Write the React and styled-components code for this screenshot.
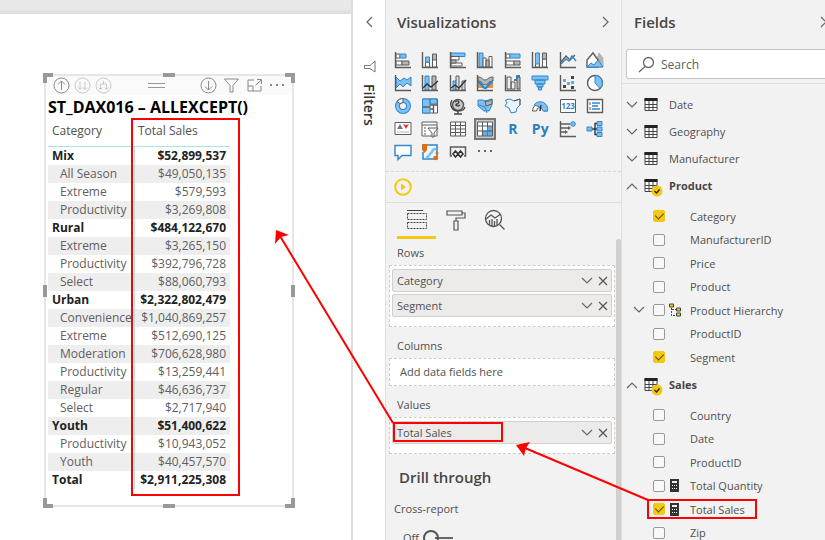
import React, { useState } from "react";
import styled, { createGlobalStyle, css } from "styled-components";

const GlobalStyle = createGlobalStyle`
  * {
    box-sizing: border-box;
  }

  body {
    margin: 0;
    overflow: hidden;
    background: #fff;
    color: #505050;
    font-family: "Open Sans", "Noto Sans", sans-serif;
    font-size: 12px;
  }

  button, input {
    font-family: inherit;
    font-size: inherit;
    color: inherit;
  }

  svg {
    display: block;
    flex: none;
  }
`;

const Page = styled.div`
  position: relative;
  display: flex;
  height: 100vh;
  overflow: hidden;
`;

const IconButton = styled.button`
  display: flex;
  align-items: center;
  justify-content: center;
  padding: 0;
  border: none;
  background: none;
  cursor: pointer;
`;

/* report canvas */

const Canvas = styled.main`
  flex: 1;
  min-width: 0;
`;

const CanvasEdge = styled.div`
  height: 14px;
  background: linear-gradient(#e8e8e8 60%, #dcdcdc);
`;

const Visual = styled.section`
  position: relative;
  width: 250px;
  margin: 60px 0 0 44px;
  padding-bottom: 16px;
  border: 2px solid #e6e6e6;
`;

const Handle = styled.span`
  position: absolute;
  width: ${(p) => (p.$side ? "4px" : p.$middle ? "12px" : "10px")};
  height: ${(p) => (p.$side ? "12px" : p.$middle ? "4px" : "10px")};
  ${(p) => p.$v}: ${(p) => (p.$side ? "calc(50% - 6px)" : "-3px")};
  ${(p) => p.$h}: ${(p) => (p.$middle ? "calc(50% - 6px)" : "-3px")};
  ${(p) =>
    p.$side || p.$middle
      ? css`
          background: #999;
        `
      : css`
          border: 0 solid #999;
          border-${p.$v}-width: 4px;
          border-${p.$h}-width: 4px;
        `}
`;

const VisualToolbar = styled.div`
  display: flex;
  align-items: center;
  justify-content: space-between;
  height: 19px;
  padding: 0 6px 0 7px;
  background: #fafafa;
`;

const ToolGroup = styled.div`
  display: flex;
  align-items: center;
  gap: ${(p) => p.$gap}px;
`;

const VisualTitle = styled.h1`
  margin: 0 0 0 2px;
  color: #000;
  font-size: 16px;
  font-weight: 700;
  line-height: 24px;
  white-space: nowrap;
`;

const Matrix = styled.table`
  width: 182px;
  margin-left: 2px;
  border-spacing: 0;
  table-layout: fixed;
  white-space: nowrap;

  th,
  td {
    height: 18px;
    padding: 0 4px;
    line-height: 18px;
    text-align: left;
  }

  thead th {
    height: 28px;
    padding-bottom: 4px;
    border-bottom: 1px solid #a9e4e4;
    font-weight: 400;
  }

  thead th:first-child {
    width: 86px;
  }

  tbody tr:nth-child(even) {
    background: #eeeeee;
  }
`;

const MatrixRow = styled.tr`
  color: ${(p) => (p.$strong ? "#222" : "#606060")};

  th {
    padding-left: ${(p) => (p.$strong ? "4px" : "12px")};
    font-weight: ${(p) => (p.$strong ? 700 : 400)};
  }

  td {
    border-left: 1px solid #b5e3e3;
    font-weight: ${(p) => (p.$strong ? 700 : 400)};
    text-align: right;
  }
`;

/* filters */

const FiltersPane = styled.aside`
  display: flex;
  flex-direction: column;
  align-items: center;
  width: 34px;
  padding-top: 16px;
  border-left: 2px solid #dcdcdc;
  background: #fff;

  h2 {
    margin: 11px 0 0;
    color: #333;
    font-size: 14px;
    font-weight: 600;
    line-height: 18px;
    writing-mode: vertical-rl;
  }
`;

const FilterMark = styled.div`
  margin-top: 32px;
`;

/* side panes */

const Pane = styled.aside`
  width: ${(p) => p.$width}px;
  border-left: 1px solid #e1dfdd;
  background: #f3f2f2;
  font-size: 11px;
  white-space: nowrap;
`;

const PaneHeader = styled.header`
  display: flex;
  align-items: center;
  justify-content: space-between;
  height: 44px;
  padding: 0 ${(p) => p.$end}px 0 ${(p) => p.$start}px;
`;

const PaneTitle = styled.h2`
  margin: 0;
  color: #484644;
  font-size: 15px;
  font-weight: 600;
`;

const Gallery = styled.div`
  display: grid;
  grid-template-columns: repeat(8, 1fr);
  grid-auto-rows: 23px;
  margin-top: 4px;
  padding: 0 12px 8px 3px;
  border-bottom: 1px dashed #d8d6d4;
`;

const GalleryButton = styled(IconButton)`
  justify-self: center;
  align-self: center;
  width: 22px;
  height: 22px;
  color: #2e7fbe;
  font-size: 14px;
  font-weight: 700;
  border: ${(p) => (p.$active ? "2px solid #777" : "none")};
  background: ${(p) => (p.$active ? "#c9c9c9" : "none")};
`;

const RunRow = styled.div`
  display: flex;
  align-items: center;
  height: 31px;
  padding-left: 8px;
  border-bottom: 1px solid #dedcda;
`;

const Tabs = styled.div`
  display: flex;
  padding-left: 11px;
`;

const Tab = styled(IconButton)`
  width: 39px;
  height: 36px;
  border-bottom: 3px solid ${(p) => (p.$active ? "#f2c811" : "transparent")};
`;

const Wells = styled.div`
  display: flex;
`;

const WellList = styled.div`
  flex: 1;
  min-width: 0;
  padding-left: 3px;
`;

const Scrollbar = styled.div`
  width: 5px;
  margin-left: 1px;
  height: 400px;
  border-radius: 3px 3px 0 0;
  background: #d2d0ce;
`;

const WellLabel = styled.h3`
  margin: 0;
  padding: ${(p) => (p.$first ? 5 : 10)}px 8px 3px;
  color: #505050;
  font-size: 11px;
  font-weight: 400;
  line-height: 18px;
`;

const Well = styled.div`
  display: flex;
  flex-direction: column;
  gap: 2px;
  padding: 3px 2px ${(p) => (p.$tail ? 9 : 3)}px;
  border: 1px dashed #cfcdcb;
  background: #fff;
`;

const WellItem = styled.div`
  display: flex;
  align-items: center;
  height: 23px;
  padding: 0 0 0 4px;
  border: 1px solid #d2d0ce;
  border-radius: 2px;
  background: #edebe9;

  span {
    flex: 1;
  }

  button {
    width: 16px;
    height: 16px;
  }
`;

const Placeholder = styled.div`
  padding-left: 8px;
  line-height: 20px;
`;

const DrillTitle = styled.h2`
  margin: 9px 0 0;
  padding-left: 10px;
  color: #484644;
  font-size: 15px;
  font-weight: 600;
  line-height: 28px;
`;

const ToggleLabel = styled.div`
  padding: 9px 0 0 5px;
  line-height: 18px;
`;

const Toggle = styled.label`
  display: flex;
  align-items: center;
  gap: 4px;
  padding: 11px 0 0 14px;
  line-height: 18px;

  input {
    appearance: none;
    display: flex;
    align-items: center;
    width: 30px;
    height: 12px;
    margin: 0;
    background: linear-gradient(#666, #666) right center / 18px 2px no-repeat;
  }

  input::before {
    content: "";
    width: 12px;
    height: 12px;
    border: 2px solid #555;
    border-radius: 50%;
  }
`;

/* fields */

const SearchBox = styled.label`
  display: flex;
  align-items: center;
  gap: 6px;
  height: 30px;
  margin: 5px -4px 0 4px;
  padding-left: 11px;
  border: 1px solid #c8c6c4;
  border-radius: 2px;
  background: #fff;
  font-size: 12px;

  input {
    width: 100%;
    min-width: 0;
    padding: 0;
    border: none;
    outline: none;
    background: none;
  }

  input::placeholder {
    color: #605e5c;
    opacity: 1;
  }
`;

const Tree = styled.div`
  margin-top: 4px;
  padding-top: 7px;
  border-top: 1px solid #e1dfdd;
`;

const TableGroup = styled.div`
  display: flex;
  align-items: center;
  gap: 6px;
  height: 27px;
  padding-left: 4px;
  color: ${(p) => (p.$open ? "#484644" : "#505050")};
  font-weight: ${(p) => (p.$open ? 700 : 400)};

  & > span:last-child {
    padding-left: 5px;
  }
`;

const TableIcon = styled.span`
  position: relative;
`;

const UsedBadge = styled.span`
  position: absolute;
  top: 6px;
  left: 7px;
`;

const FieldList = styled.ul`
  margin: 0;
  padding: 5px 0 2px;
  list-style: none;
`;

const FieldRow = styled.li`
  display: flex;
  align-items: center;
  height: 24px;
  padding-left: 11px;

  &:nth-child(even) {
    height: 23px;
  }

  label {
    display: flex;
    align-items: center;
  }
`;

const ExpandSlot = styled.span`
  width: 20px;
`;

const KindSlot = styled.span`
  width: 25px;
  padding-left: 4px;
`;

const CheckBox = styled.input`
  appearance: none;
  display: flex;
  justify-content: center;
  width: 12px;
  height: 12px;
  margin: 0;
  border: 1px solid #999;
  border-radius: 2px;
  background: #f8f8f8;

  &:checked {
    border-color: #f2c811;
    background: #f2c811;
  }

  &:checked::before {
    content: "";
    width: 4px;
    height: 7px;
    border: solid #554400;
    border-width: 0 1px 1px 0;
    transform: rotate(45deg);
  }
`;

const Annotations = styled.svg`
  position: absolute;
  top: 0;
  left: 0;
  pointer-events: none;
`;

const D = "#5c5c5c";
const B = "#2f86c9";
const F = "#7fc0f2";
const G = "#b5b5b5";

const Axis = () => <path d="M1.5 1v15.5H17" stroke={D} strokeWidth="1.4" />;

const galleryIcons = [
  ["Stacked bar chart", <><path d="M2 3h4v4H2zM2 10h6v4H2z" fill="#fff" stroke={D} /><path d="M6 3h6v4H6z" fill={F} stroke={B} /><path d="M8 10h7v4H8z" fill={G} stroke={D} /><Axis /></>],
  ["Stacked column chart", <><path d="M4.5 11h4v5h-4zM11.5 8h4v8h-4z" fill="#fff" stroke={D} /><path d="M4.5 6h4v5h-4z" fill={F} stroke={B} /><path d="M11.5 3h4v6h-4z" fill={G} stroke={D} /><Axis /></>],
  ["Clustered bar chart", <><path d="M2 2h14v3.5H2z" fill={F} stroke={B} /><path d="M2 5.5h8V9H2zM2 12h11v3H2z" fill="#fff" stroke={D} /><path d="M2 9h5v3H2z" fill={G} stroke={D} /><Axis /></>],
  ["Clustered column chart", <><path d="M3 2h4v14H3z" fill={F} stroke={B} /><path d="M7 7h3v9H7zM13 5.500h3V16h-3z" fill="#fff" stroke={D} /><path d="M10 9h3v7h-3z" fill={G} stroke={D} /><Axis /></>],
  ["100% stacked bar chart", <><path d="M2 3h4v4H2zM2 10h8v4H2z" fill="#fff" stroke={D} /><path d="M6 3h10v4H6z" fill={F} stroke={B} /><path d="M10 10h6v4h-6z" fill={G} stroke={D} /><Axis /></>],
  ["100% stacked column chart", <><path d="M4.500 12h4v4h-4zM11.500 8h4v8h-4z" fill="#fff" stroke={D} /><path d="M4.500 2h4v11h-4z" fill={F} stroke={B} /><path d="M11.500 2h4v6h-4z" fill={G} stroke={D} /><Axis /></>],
  ["Line chart", <><path d="M2 11 7 5l4 4 5-5" stroke={D} strokeWidth="1.4" /><path d="m2 13 5-5 3 2 3-5 4 5" stroke={B} strokeWidth="1.4" /><Axis /></>],
  ["Area chart", <><path d="M8 16 13 2l4 5v9z" fill={G} stroke={G} /><path d="M1 16V9l6-7 5 7v7z" fill="#fff" stroke={D} strokeWidth="1.4" /><path d="m1 16 4-4 3 2 4-5 5 7z" fill={F} stroke={B} /></>],
  ["Stacked area chart", <><path d="m2 3 4 4 4-3 3 2 4-3v9l-4-3-4 4-3-3-4 4z" fill={F} stroke={B} /><Axis /></>],
  ["Line and stacked column chart", <><path d="M4 2h4v14H4z" fill={F} stroke={B} /><path d="M11 2h4v14h-4z" fill={G} stroke={D} /><path d="m2 14 4-4 4 3 7-6" stroke="#333" strokeWidth="1.4" /><Axis /></>],
  ["Line and clustered column chart", <><path d="M4 7h3v9H4z" fill={F} stroke={B} /><path d="M7 2h3v14H7zM13 7h3v9h-3z" fill="#ddd" stroke={D} /><path d="m2 14 4-3 4 3 7-8" stroke="#333" strokeWidth="1.4" /><Axis /></>],
  ["Ribbon chart", <><path d="M2 9c5 0 4 6 7 6s3-6 8-6v5H2z" fill="#e8923c" /><path d="M2 3c5 0 4 3 7 3s3-3 8-3v4c-5 0-5 4-8 4S7 7 2 7z" fill={G} stroke={D} /><path d="M2 8c4 0 4 6 7 6s3-6 8-6" stroke={B} strokeWidth="2.500" /><Axis /></>],
  ["Waterfall chart", <><path d="M3 3h4v12H3zM7 8h4v7H7z" fill="#eee" stroke={D} /><path d="M10 6h3V2h3" stroke={B} strokeWidth="2" /><path d="M13 3h3v12h-3z" fill={G} stroke={D} /><Axis /></>],
  ["Funnel chart", <path d="M1 2h16v4H1zM4 6h10v4H4zM6 10h6v3H6zM7.500 13h3v3h-3z" fill={F} stroke={B} />],
  ["Scatter chart", <><Axis /><path d="M4 11h3v3H4zM12 2h3v3h-3zM12 12h3v3h-3z" fill="#444" /><path d="M4 5h3v3H4zM8 8h3v3H8zM12 7h3v3h-3z" fill="#62a9df" /></>],
  ["Pie chart", <><circle cx="9" cy="9" r="7.500" fill="#fff" stroke={D} strokeWidth="1.4" /><path d="M9 1.500a7.500 7.500 0 0 1 5 13L9 9z" fill={F} stroke={B} /></>],
  ["Donut chart", <><circle cx="9" cy="9" r="5.500" stroke={B} strokeWidth="5" /><circle cx="9" cy="9" r="5.500" stroke={F} strokeWidth="3" /><path d="M9 1.500a7.500 7.500 0 0 0-6 3l3 2 3-1z" fill="#fff" stroke={D} /></>],
  ["Treemap", <><path d="M1.500 2h15v14h-15z" fill="#fff" stroke={D} /><path d="M1.500 2H9v14H1.500zM9 2h7v5H9z" fill={F} stroke={B} /><path d="M9 8h7M12.500 8v8M9 12h4M2 10h7" stroke={D} strokeWidth="1.4" /></>],
  ["Map", <><circle cx="9" cy="8" r="5.500" fill="#ccc" stroke={D} strokeWidth="1.500" /><path d="M6 5c4-3 5 1 2 2s1 3 3 1M3 3c-3 5 0 11 6 11s6-2 7-4M9 14v3M5 17h8" stroke="#444" strokeWidth="1.400" /></>],
  ["Filled map", <><path d="M2 3h5l2 1 7-2v6l-3 6H8L2 9z" fill={F} stroke={B} /><path d="M9 4c3 1 5 0 7-2v5l-6 2z" fill={G} stroke={D} /><path d="m3 8 6 2 2 6" stroke={B} /></>],
  ["Shape map", <><path d="M1.500 3 6 2l4 2 6-2v6l-3 3-1 4-5 1-2-5-4-2 2-3z" fill="#eaf4fc" stroke={B} /><path d="m10 4 6-2v6" stroke={D} /></>],
  ["Gauge", <><path d="M1.500 14a7.500 7.500 0 0 1 15 0h-4a3.500 3.500 0 0 0-7 0z" fill="#fff" stroke={D} /><path d="M3 8a7.500 7.500 0 0 1 13.500 6h-4L9 10z" fill={F} stroke={B} /><path d="m9 14 1-6" stroke="#333" strokeWidth="1.400" /></>],
  ["Card", <><path d="M1.500 2.500h15v13h-15z" fill="#fff" stroke={D} /><text x="9" y="12" textAnchor="middle" fontSize="8" fill={B}>123</text></>],
  ["Multi-row card", <><path d="M1.500 2.500h15v13h-15z" fill="#fff" stroke={D} strokeWidth="1.4" /><path d="M4 5v3M4 10v3" stroke={D} /><path d="M6 6h8M6 9h6M6 12h8" stroke={B} strokeWidth="1.400" /></>],
  ["KPI", <><path d="M1 2.500h16v12H1z" fill="#fff" stroke={D} /><path d="m3 9 3-5 3 5z" fill="#777" /><path d="m9 4 3 1 3-1-3 5z" fill="#e23b35" /><path d="M3 12h12" stroke={G} /></>],
  ["Slicer", <><path d="M1 2h15v14H1zM1 5h15" fill="#fff" stroke={D} /><path d="M3 8h2M3 11h2M3 14h2" stroke={D} /><path d="M7 8h10l-4 5v4h-2v-4z" fill="#fff" stroke={D} /></>],
  ["Table", <><path d="M1.500 2h15v14h-15z" fill="#fff" stroke={D} /><path d="M1.500 5.500h15M1.500 9h15M1.500 12.500h15M6.500 2v14M11.500 2v14" stroke={D} /></>],
  ["Matrix", <><path d="M1.500 2h15v14h-15z" fill="#fff" /><path d="M6 11h11v5H6zM11.500 6H17v5h-5.500z" fill="#62aee8" /><path d="M1.500 2h15v14h-15zM1.500 6h15M1.500 11h15M6.500 2v14M11.500 2v14" stroke={D} /><path d="M7 11h9M11.500 7v9" stroke={B} /></>],
  ["R script visual", "R"],
  ["Python visual", "Py"],
  ["Key influencers", <><Axis /><path d="M2 4h9M2 8h7M2 12h4" stroke={D} strokeWidth="1.400" /><path d="m9 6 3 2-3 2M6 10l3 2-3 2" fill={D} /><circle cx="14" cy="4" r="2.300" fill={F} stroke={B} /></>],
  ["Decomposition tree", <><path d="M6 9h5M9 9V3.500h2M9 9v5.500h2" stroke="#333" strokeWidth="1.400" /><path d="M1 7h5v4H1zM11 1.500h5v4h-5zM11 7h5v4h-5zM11 12.500h5v4h-5z" fill={F} stroke={B} /></>],
  ["Q&A", <path d="M1 2.500h16v10H8l-4 4v-4H1z" fill="#fff" stroke={B} strokeWidth="1.400" />],
  ["ArcGIS map", <><path d="M3 2h13v14H2V9" fill="#eef6fc" stroke={B} strokeWidth="1.500" /><path d="M5 14c3 1 3-3 5-4s0-4 5-4" stroke={F} strokeWidth="2.500" /><path d="M1 1h5v6L3.500 10 1 7z" fill="#d8731b" /><circle cx="14.500" cy="15" r="2.300" fill="#d8731b" /><circle cx="16" cy="10" r="1.500" fill="#d8731b" /></>],
  ["Power Apps", <><path d="M3 13H1.500V4h15v9H15" stroke={D} strokeWidth="1.500" /><path d="m6.500 8 2.500 3-2.500 3L4 11zM11.500 8l2.500 3-2.500 3L9 11z" fill="#fff" stroke="#333" strokeWidth="1.600" /></>],
  ["More visuals", <path d="M2 7h2v2H2zM8 7h2v2H8zM14 7h2v2h-2z" fill="#666" />],
];

const rows = [
  ["Mix", "$52,899,537", true],
  ["All Season", "$49,050,135"],
  ["Extreme", "$579,593"],
  ["Productivity", "$3,269,808"],
  ["Rural", "$484,122,670", true],
  ["Extreme", "$3,265,150"],
  ["Productivity", "$392,796,728"],
  ["Select", "$88,060,793"],
  ["Urban", "$2,322,802,479", true],
  ["Convenience", "$1,040,869,257"],
  ["Extreme", "$512,690,125"],
  ["Moderation", "$706,628,980"],
  ["Productivity", "$13,259,441"],
  ["Regular", "$46,636,737"],
  ["Select", "$2,717,940"],
  ["Youth", "$51,400,622", true],
  ["Productivity", "$10,943,052"],
  ["Youth", "$40,457,570"],
  ["Total", "$2,911,225,308", true],
];

const tables = [
  { name: "Date" },
  { name: "Geography" },
  { name: "Manufacturer" },
  {
    name: "Product",
    fields: [
      { name: "Category" },
      { name: "ManufacturerID" },
      { name: "Price" },
      { name: "Product" },
      { name: "Product Hierarchy", kind: "hierarchy" },
      { name: "ProductID" },
      { name: "Segment" },
    ],
  },
  {
    name: "Sales",
    fields: [
      { name: "Country" },
      { name: "Date" },
      { name: "ProductID" },
      { name: "Total Quantity", kind: "measure" },
      { name: "Total Sales", kind: "measure" },
      { name: "Zip" },
    ],
  },
];

const chevrons = {
  left: "M9 1 4 6l5 5",
  right: "m3 1 5 5-5 5",
  up: "m1 9 5-5 5 5",
  down: "m1 3 5 5 5-5",
};

function Chevron({ dir }) {
  return (
    <svg width="12" height="12" fill="none" stroke="#666" strokeWidth="1.2">
      <path d={chevrons[dir]} />
    </svg>
  );
}

function RoundTool({ label, d, faint }) {
  return (
    <IconButton aria-label={label}>
      <svg width="17" height="17" fill="none" stroke={faint ? "#c8c8c8" : "#888"}>
        <circle cx="8.5" cy="8.5" r="7.5" />
        <path d={d} />
      </svg>
    </IconButton>
  );
}

function MatrixVisual() {
  return (
    <Visual>
      <VisualToolbar>
        <ToolGroup $gap={4}>
          <RoundTool label="Drill up" d="M8.500 13V4M5 7.500 8.500 4 12 7.500" />
          <RoundTool label="Next level" faint d="M6 4.500v8M4 10.500l2 2 2-2M11 4.500v8M9 10.500l2 2 2-2" />
          <RoundTool label="Expand all" faint d="M8.500 4v3M5.500 12V7h6v5M3.500 10.500l2 2 2-2M9.500 10.500l2 2 2-2" />
        </ToolGroup>
        <svg width="17" height="7" stroke="#999">
          <path d="M0 1.500h17M0 5.500h17" />
        </svg>
        <ToolGroup $gap={6}>
          <RoundTool label="Drill down" d="M8.500 4v9M5 9.500 8.500 13 12 9.500" />
          <IconButton aria-label="Filters on this visual">
            <svg width="17" height="17" fill="none" stroke="#888">
              <path d="M1.500 2h14l-5.500 6.500V15H7V8.500z" />
            </svg>
          </IconButton>
          <IconButton aria-label="Focus mode">
            <svg width="17" height="17" fill="none" stroke="#888">
              <path d="M8 3H2v11h13V9M11 2.500h4.500V7M15 3l-5.500 5.500M2 9h5v5" />
            </svg>
          </IconButton>
          <IconButton aria-label="More options">
            <svg width="17" height="17" fill="#888">
              <path d="M1 7h2v2H1zM7 7h2v2H7zM13 7h2v2h-2z" />
            </svg>
          </IconButton>
        </ToolGroup>
      </VisualToolbar>
      <VisualTitle>ST_DAX016 – ALLEXCEPT()</VisualTitle>
      <Matrix>
        <thead>
          <tr>
            <th scope="col">Category</th>
            <th scope="col">Total Sales</th>
          </tr>
        </thead>
        <tbody>
          {rows.map(([name, value, strong], i) => (
            <MatrixRow key={i} $strong={strong}>
              <th scope="row">{name}</th>
              <td>{value}</td>
            </MatrixRow>
          ))}
        </tbody>
      </Matrix>
      <Handle $v="top" $h="left" />
      <Handle $v="top" $h="left" $middle />
      <Handle $v="top" $h="right" />
      <Handle $v="top" $h="left" $side />
      <Handle $v="top" $h="right" $side />
      <Handle $v="bottom" $h="left" />
      <Handle $v="bottom" $h="left" $middle />
      <Handle $v="bottom" $h="right" />
    </Visual>
  );
}

function FieldWell({ label, items, tail, first }) {
  return (
    <section>
      <WellLabel $first={first}>{label}</WellLabel>
      <Well $tail={tail}>
        {items.map((item) => (
          <WellItem key={item}>
            <span>{item}</span>
            <IconButton aria-label={`${item} options`}>
              <Chevron dir="down" />
            </IconButton>
            <IconButton aria-label={`Remove ${item}`}>
              <svg width="10" height="10" stroke="#555" strokeWidth="1.2">
                <path d="m1 1 8 8M9 1 1 9" />
              </svg>
            </IconButton>
          </WellItem>
        ))}
        {items.length === 0 && <Placeholder>Add data fields here</Placeholder>}
      </Well>
    </section>
  );
}

function Visualizations() {
  return (
    <Pane $width={236}>
      <PaneHeader $start={11} $end={9}>
        <PaneTitle>Visualizations</PaneTitle>
        <IconButton aria-label="Collapse Visualizations">
          <Chevron dir="right" />
        </IconButton>
      </PaneHeader>
      <Gallery>
        {galleryIcons.map(([name, icon]) => (
          <GalleryButton key={name} aria-label={name} $active={name === "Matrix"}>
            {typeof icon === "string" ? (
              icon
            ) : (
              <svg width="18" height="18" fill="none">
                {icon}
              </svg>
            )}
          </GalleryButton>
        ))}
      </Gallery>
      <RunRow>
        <IconButton aria-label="Run visual">
          <svg width="18" height="18" fill="none">
            <circle cx="9" cy="9" r="7.800" stroke="#f2c811" strokeWidth="2" />
            <path d="m7 5.500 5 3.500-5 3.500z" fill="#f2c811" />
          </svg>
        </IconButton>
      </RunRow>
      <Tabs>
        <Tab aria-label="Fields" $active>
          <svg width="22" height="22" fill="none" stroke="#444">
            <path d="M1 1.500h16" />
            <path d="M1.500 4.500h19v6h-19zM1.500 13.500h19v6h-19z" strokeDasharray="2 1" />
          </svg>
        </Tab>
        <Tab aria-label="Format">
          <svg width="22" height="22" fill="none" stroke="#555" strokeWidth="1.200">
            <path d="M2 2h15v4H2zM17 4h3v5h-9v3M9 12h4v9H9z" />
          </svg>
        </Tab>
        <Tab aria-label="Analytics">
          <svg width="22" height="22" fill="none" stroke="#555" strokeWidth="1.300">
            <circle cx="9.500" cy="9.500" r="8" />
            <path d="m15.500 15.500 5 5M2 10l5-4 4 3 6-4M5.500 11v5M8 10v7M10.500 12v5M13 10v6" />
          </svg>
        </Tab>
      </Tabs>
      <Wells>
        <WellList>
          <FieldWell first label="Rows" items={["Category", "Segment"]} tail />
          <FieldWell label="Columns" items={[]} />
          <FieldWell label="Values" items={["Total Sales"]} tail />
          <DrillTitle>Drill through</DrillTitle>
          <ToggleLabel id="cross-report">Cross-report</ToggleLabel>
          <Toggle>
            Off
            <input type="checkbox" role="switch" aria-labelledby="cross-report" />
          </Toggle>
        </WellList>
        <Scrollbar />
      </Wells>
    </Pane>
  );
}

function KindIcon({ kind }) {
  if (kind === "measure") {
    return (
      <svg width="12" height="13" fill="#333">
        <path fillRule="evenodd" d="M1 0h9v13H1zM3 2v2h5V2zM3 6v1h1V6zM5 6v1h1V6zM7 6v1h1V6zM3 9v1h1V9zM5 9v1h1V9zM7 9v1h1V9z" />
      </svg>
    );
  }
  if (kind === "hierarchy") {
    return (
      <svg width="13" height="14" fill="#f2c811" stroke="#444">
        <path d="M2.500 5v7.500H7M3 6.500h4" fill="none" strokeDasharray="2 1" />
        <path d="M.5 1h4v3h-4zM7.500 5h4v3h-4zM7.500 10h4v3h-4z" />
      </svg>
    );
  }
  return null;
}

function Fields() {
  const [used, setUsed] = useState({
    "Product.Category": true,
    "Product.Segment": true,
    "Sales.Total Sales": true,
  });

  const toggle = (key) => setUsed({ ...used, [key]: !used[key] });

  return (
    <Pane $width={204}>
      <PaneHeader $start={12} $end={0}>
        <PaneTitle>Fields</PaneTitle>
        <IconButton aria-label="Collapse Fields">
          <svg width="5" height="12" fill="none" stroke="#666" strokeWidth="1.2">
            <path d="m1 1 5 5-5 5" />
          </svg>
        </IconButton>
      </PaneHeader>
      <SearchBox>
        <svg width="17" height="17" fill="none" stroke="#666" strokeWidth="1.300">
          <circle cx="10.500" cy="6.500" r="5" />
          <path d="M7 10.500 1 16" />
        </svg>
        <input type="text" placeholder="Search" aria-label="Search fields" />
      </SearchBox>
      <Tree>
        {tables.map((table) => (
          <React.Fragment key={table.name}>
            <TableGroup $open={table.fields}>
              <IconButton aria-label={`Toggle ${table.name}`}>
                <Chevron dir={table.fields ? "up" : "down"} />
              </IconButton>
              <TableIcon>
                <svg width="14" height="13" fill="none" stroke="#444">
                  <path d="M1 .5h12v12H1z" fill="#fff" />
                  <path d="M1 6.500h12M1 9.500h12M5 3v10M9 3v10" />
                  <path d="M.5 1.500h13" stroke="#222" strokeWidth="3" />
                </svg>
                {table.fields && (
                  <UsedBadge>
                    <svg width="12" height="12" fill="none">
                      <circle cx="6" cy="6" r="5.500" fill="#f2c811" />
                      <path d="m3.500 6 2 2 3-3.500" stroke="#222" strokeWidth="1.300" />
                    </svg>
                  </UsedBadge>
                )}
              </TableIcon>
              <span>{table.name}</span>
            </TableGroup>
            {table.fields && (
              <FieldList>
                {table.fields.map((field) => {
                  const key = `${table.name}.${field.name}`;
                  return (
                    <FieldRow key={key}>
                      <ExpandSlot>
                        {field.kind === "hierarchy" && (
                          <IconButton aria-label="Expand hierarchy">
                            <Chevron dir="down" />
                          </IconButton>
                        )}
                      </ExpandSlot>
                      <label>
                        <CheckBox
                          type="checkbox"
                          checked={!!used[key]}
                          onChange={() => toggle(key)}
                        />
                        <KindSlot>
                          <KindIcon kind={field.kind} />
                        </KindSlot>
                        {field.name}
                      </label>
                    </FieldRow>
                  );
                })}
              </FieldList>
            )}
          </React.Fragment>
        ))}
      </Tree>
    </Pane>
  );
}

function App() {
  return (
    <Page>
      <GlobalStyle />
      <Canvas>
        <CanvasEdge />
        <MatrixVisual />
      </Canvas>
      <FiltersPane>
        <IconButton aria-label="Expand Filters">
          <Chevron dir="left" />
        </IconButton>
        <FilterMark>
          <svg width="13" height="13" fill="none" stroke="#777">
            <path d="M12 1v11L7 8.500H1.500v-3H7z" />
          </svg>
        </FilterMark>
        <h2>Filters</h2>
      </FiltersPane>
      <Visualizations />
      <Fields />
      <Annotations width="825" height="540" fill="none" stroke="#f00" strokeWidth="2">
        <path d="M132 119h107v376H132zM394 423h108v18H394zM648 500h108v18H648z" />
        <path d="M393 423 280 236M648 500 525 448" />
        <path d="m276 230 13 5-8 2-6 7zM516 445l14-3-4 6-2 8z" fill="#f00" stroke="none" />
      </Annotations>
    </Page>
  );
}

export default App;
